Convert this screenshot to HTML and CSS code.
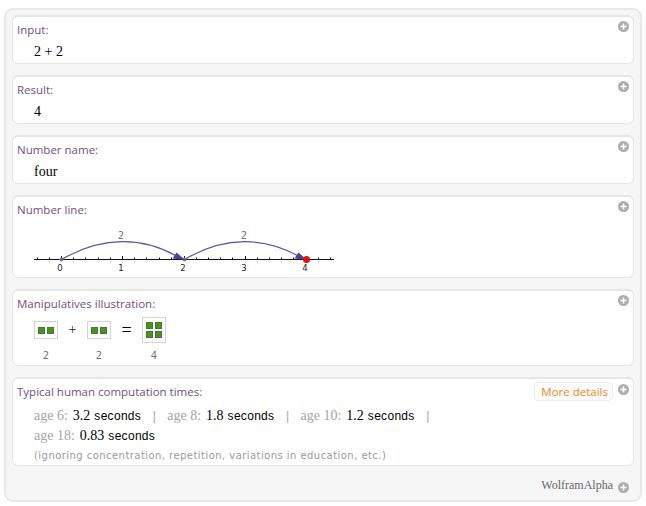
FILE: index.html
```html
<!DOCTYPE html>
<html lang="en">
<head>
    <meta charset="UTF-8">
    <title>WolframAlpha - 2 + 2</title>
    <link rel="stylesheet" href="styles.css">
</head>
<body>
    <div class="results">
        <!-- Input -->
        <div class="pod pod-short">
            <h2 class="pod-title">Input:</h2>
            <p class="math">2 + 2</p>
            <svg class="plus" viewBox="0 0 11 11"><circle cx="5.5" cy="5.5" r="5.5"/><path d="M5.5 2.5v6M2.5 5.5h6"/></svg>
        </div>

        <!-- Result -->
        <div class="pod pod-short">
            <h2 class="pod-title">Result:</h2>
            <p class="math">4</p>
            <svg class="plus" viewBox="0 0 11 11"><circle cx="5.5" cy="5.5" r="5.5"/><path d="M5.5 2.5v6M2.5 5.5h6"/></svg>
        </div>

        <!-- Number name -->
        <div class="pod pod-short">
            <h2 class="pod-title">Number name:</h2>
            <p class="math">four</p>
            <svg class="plus" viewBox="0 0 11 11"><circle cx="5.5" cy="5.5" r="5.5"/><path d="M5.5 2.5v6M2.5 5.5h6"/></svg>
        </div>

        <!-- Number line -->
        <div class="pod pod-line">
            <h2 class="pod-title">Number line:</h2>
            <svg class="number-line" width="320" height="50" viewBox="0 0 320 50">
                <path class="axis" d="M0 34.5H300"/>
                <path class="ticks" d="M3.5 32.5v2M15.5 32.5v2M39.5 32.5v2M51.5 32.5v2M64.5 32.5v2M76.5 32.5v2M100.5 32.5v2M112.5 32.5v2M125.5 32.5v2M137.5 32.5v2M162.5 32.5v2M174.5 32.5v2M186.5 32.5v2M198.5 32.5v2M223.5 32.5v2M235.5 32.5v2M247.5 32.5v2M259.5 32.5v2M284.5 32.5v2M296.5 32.5v2"/>
                <path class="ticks" d="M27.5 31v4M88.5 31v4M150.5 31v4M211.5 31v4M272.5 31v4"/>
                <circle class="dot" cx="27.5" cy="34.5" r="2"/>
                <circle class="dot" cx="150.5" cy="34.5" r="2"/>
                <path class="jump" d="M27.5 34.5C68 11 109 11 146 33"/>
                <path class="jump" d="M150.5 34.5C190 11 231 11 268 33"/>
                <path class="head" d="M151 35L138.5 33.5L142.5 27.5Z"/>
                <path class="head" d="M273 35L260.5 33.5L264.5 27.5Z"/>
                <circle class="end" cx="272.5" cy="34.5" r="3.5"/>
                <text class="hop" x="87" y="14">2</text>
                <text class="hop" x="210" y="14">2</text>
                <text class="num" x="26" y="46">0</text>
                <text class="num" x="87" y="46">1</text>
                <text class="num" x="149" y="46">2</text>
                <text class="num" x="210" y="46">3</text>
                <text class="num" x="271" y="46">4</text>
            </svg>
            <svg class="plus" viewBox="0 0 11 11"><circle cx="5.5" cy="5.5" r="5.5"/><path d="M5.5 2.5v6M2.5 5.5h6"/></svg>
        </div>

        <!-- Manipulatives -->
        <div class="pod pod-blocks">
            <h2 class="pod-title">Manipulatives illustration:</h2>
            <div class="blocks">
                <div class="block-col">
                    <div class="block-box"><span class="cube"></span><span class="cube"></span></div>
                    <span class="block-num">2</span>
                </div>
                <span class="op">+</span>
                <div class="block-col">
                    <div class="block-box"><span class="cube"></span><span class="cube"></span></div>
                    <span class="block-num">2</span>
                </div>
                <span class="op op-eq">=</span>
                <div class="block-col">
                    <div class="block-box block-box-big"><span class="cube"></span><span class="cube"></span><span class="cube"></span><span class="cube"></span></div>
                    <span class="block-num">4</span>
                </div>
            </div>
            <svg class="plus" viewBox="0 0 11 11"><circle cx="5.5" cy="5.5" r="5.5"/><path d="M5.5 2.5v6M2.5 5.5h6"/></svg>
        </div>

        <!-- Computation times -->
        <div class="pod pod-times">
            <h2 class="pod-title">Typical human computation times:</h2>
            <button class="more">More details</button>
            <div class="times-row">
                <span class="age">age 6:</span><span class="val">3.2</span><span class="unit">seconds</span><span class="sep">|</span>
                <span class="age">age 8:</span><span class="val">1.8</span><span class="unit">seconds</span><span class="sep">|</span>
                <span class="age">age 10:</span><span class="val">1.2</span><span class="unit">seconds</span><span class="sep">|</span>
            </div>
            <div class="times-row">
                <span class="age">age 18:</span><span class="val">0.83</span><span class="unit">seconds</span>
            </div>
            <p class="note">(ignoring concentration, repetition, variations in education, etc.)</p>
            <svg class="plus plus-low" viewBox="0 0 11 11"><circle cx="5.5" cy="5.5" r="5.5"/><path d="M5.5 2.5v6M2.5 5.5h6"/></svg>
        </div>

        <!-- Footer -->
        <div class="footer">
            <span class="brand">WolframAlpha</span>
            <svg class="plus-footer" viewBox="0 0 11 11"><circle cx="5.5" cy="5.5" r="5.5"/><path d="M5.5 2.5v6M2.5 5.5h6"/></svg>
        </div>
    </div>
</body>
</html>
```

FILE: styles.css
```css
* {
    margin: 0;
    padding: 0;
    box-sizing: border-box;
}

body {
    width: 646px;
    height: 506px;
    padding: 8px 4px 4px;
    background: white;
    font-family: "Open Sans", sans-serif;
    overflow: hidden;
}

.results {
    height: 494px;
    padding: 5px 6px 0;
    display: flex;
    flex-direction: column;
    gap: 11px;
    background: #f6f6f6;
    border: 2px solid #e8e8e8;
    border-radius: 9px;
}

/* Pods */
.pod {
    position: relative;
    padding: 5px 4px 0;
    background: white;
    border: 1px solid #e6e6e6;
    border-top-width: 2px;
    border-radius: 6px;
}

.pod-short {
    height: 49px;
}

.pod-line {
    height: 83px;
}

.pod-blocks {
    height: 77px;
}

.pod-times {
    height: 89px;
}

.pod-title {
    font-size: 11.5px;
    font-weight: 400;
    line-height: 15px;
    color: #6f4f85;
}

.math {
    margin: 7px 0 0 17px;
    font-family: "Liberation Serif", serif;
    font-size: 14px;
    line-height: 16px;
    color: black;
}

.plus {
    position: absolute;
    top: 4px;
    right: 4px;
    width: 11px;
    height: 11px;
}

.plus-low {
    top: 5px;
}

.plus circle,
.plus-footer circle {
    fill: #adadad;
}

.plus path,
.plus-footer path {
    stroke: white;
    stroke-width: 1.6;
    fill: none;
}

/* Number line */
.number-line {
    display: block;
    margin: 8px 0 0 17px;
}

.axis,
.ticks {
    stroke: #111;
    stroke-width: 1;
}

.dot {
    fill: #777;
}

.end {
    fill: #e01010;
}

.jump {
    fill: none;
    stroke: #5a51a3;
    stroke-width: 1.2;
}

.head {
    fill: #4a4299;
}

.hop {
    font-family: "DejaVu Sans", sans-serif;
    font-size: 10px;
    fill: #777;
    text-anchor: middle;
}

.num {
    font-family: "DejaVu Sans", sans-serif;
    font-size: 8.5px;
    fill: #222;
    text-anchor: middle;
}

/* Manipulatives */
.blocks {
    display: flex;
    align-items: flex-start;
    margin: 6px 0 0 17px;
}

.block-col {
    display: flex;
    flex-direction: column;
    align-items: center;
    width: 24px;
}

.block-box {
    margin-top: 4px;
    width: 24px;
    height: 18px;
    display: flex;
    justify-content: center;
    align-items: center;
    gap: 2px;
    border: 1px solid #d4d4d4;
}

.block-box-big {
    margin-top: 0;
    height: 26px;
    flex-wrap: wrap;
    align-content: center;
}

.cube {
    width: 7px;
    height: 7px;
    background: #4f8f1c;
    border: 1px solid #3f7a3a;
}

.block-num {
    margin-top: 11px;
    font-family: "DejaVu Sans", sans-serif;
    font-size: 10px;
    line-height: 12px;
    color: #777;
}

.block-col:last-child .block-num {
    margin-top: 7px;
}

.op {
    width: 29px;
    margin-top: 4px;
    text-align: center;
    font-family: "Liberation Serif", serif;
    font-size: 14px;
    line-height: 18px;
    color: #3a0a2a;
}

.op-eq {
    width: 31px;
    font-size: 18px;
    color: black;
}

/* Computation times */
.more {
    position: absolute;
    top: 3px;
    right: 20px;
    height: 19px;
    padding: 0 4px 0 6px;
    font-family: "Open Sans", sans-serif;
    font-size: 11.5px;
    color: #f5891f;
    background: #fbfbfb;
    border: 1px solid #eeeeee;
    border-radius: 4px;
}

.times-row {
    display: flex;
    align-items: baseline;
    margin: 9px 0 0 17px;
    height: 16px;
    line-height: 16px;
    font-size: 14px;
    font-family: "Liberation Serif", serif;
}

.times-row + .times-row {
    margin-top: 4px;
}

.age {
    margin-right: 5px;
    color: #a5a5a5;
}

.val {
    margin-right: 4px;
    color: black;
}

.unit {
    font-family: "Liberation Sans", sans-serif;
    font-size: 12px;
    letter-spacing: 0.3px;
    color: black;
}

.sep {
    margin: 0 11.5px;
    font-family: "Liberation Sans", sans-serif;
    font-size: 12px;
    color: #9aa9a0;
}

.note {
    margin: 6px 0 0 17px;
    font-family: "DejaVu Sans", sans-serif;
    font-size: 10px;
    line-height: 12px;
    letter-spacing: 0.45px;
    color: #9a9a9a;
}

/* Footer */
.footer {
    display: flex;
    align-items: center;
    justify-content: flex-end;
    gap: 5px;
    padding: 1px 0 0;
}

.brand {
    font-family: "Liberation Serif", serif;
    font-size: 12px;
    color: #666;
}

.plus-footer {
    width: 11px;
    height: 11px;
    margin: 4px 5px 0 0;
}
```
